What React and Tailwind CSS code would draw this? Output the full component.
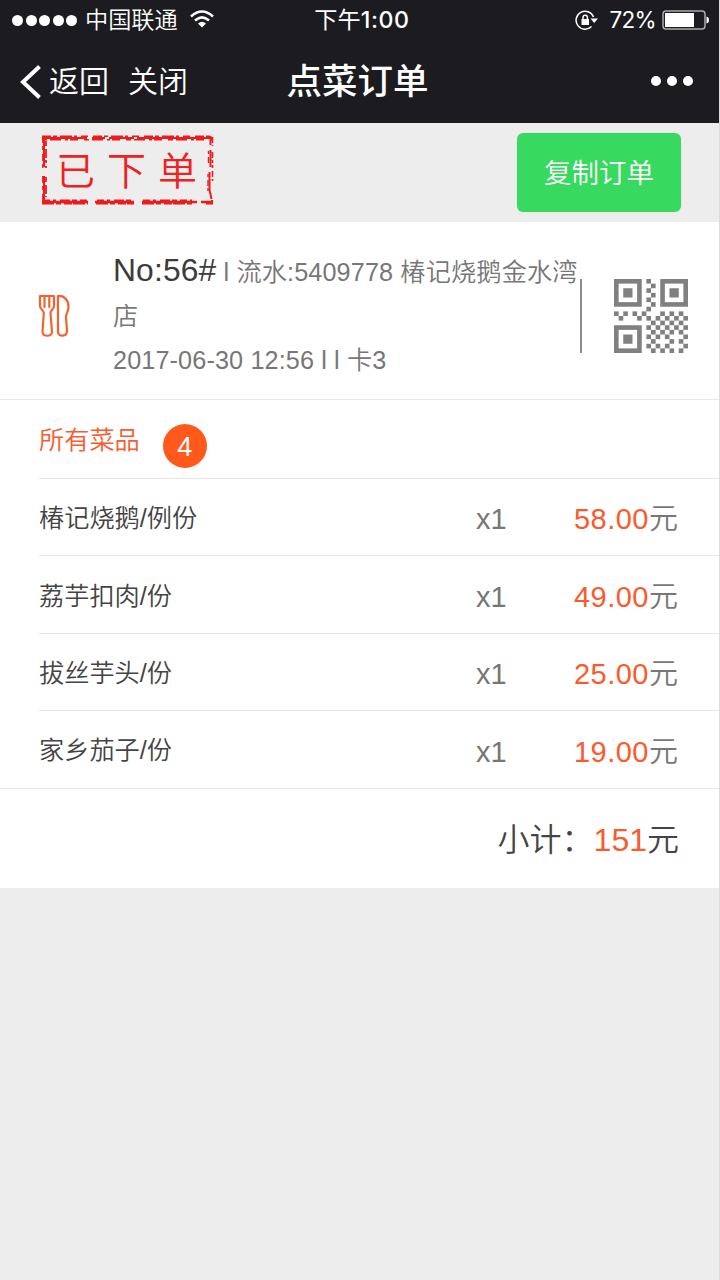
const cjk = "font-['Liberation_Sans','Noto_Sans_CJK_SC',sans-serif]";

const qr = [
  "0000000100000000",
  "0000000010000000",
  "0000000100000000",
  "0000000010000000",
  "0000000100000000",
  "0000000010000000",
  "0000000100000000",
  "1010101000101010",
  "0100010101010101",
  "0000000010101010",
  "0000000101010101",
  "0000000010101010",
  "0000000101010001",
  "0000000010001010",
  "0000000101010001",
  "0000000010101010",
];

function QrCode() {
  return (
    <svg width="74" height="74" viewBox="0 0 16 16" fill="#808080">
      {[[0, 0], [10, 0], [0, 10]].map(([x, y]) => (
        <g key={x + "-" + y} transform={`translate(${x} ${y})`}>
          <rect x="0.5" y="0.5" width="5" height="5" fill="none" stroke="#808080" />
          <rect x="2" y="2" width="2" height="2" />
        </g>
      ))}
      {qr.flatMap((row, y) =>
        [...row].map((c, x) => (c === "1" ? <rect key={x + "-" + y} x={x} y={y} width="1" height="1" /> : null)),
      )}
    </svg>
  );
}

function Stamp() {
  return (
    <div className="relative flex h-[70px] w-[172px] items-center justify-center">
      <svg className="absolute inset-0" width="172" height="70" fill="none" stroke="#f01a1c">
        <path d="M0 3H45M50 3H63M67 3H92M95 3H171" strokeWidth="2.2" />
        <path d="M0 1.300H171" strokeWidth="1.600" strokeDasharray="9 2 4 3 12 2 3 4 7 5" />
        <path d="M0 4.700H171" strokeWidth="1.600" strokeDasharray="5 3 11 4 3 2 8 6" />
        <path d="M0 67H46M53 67H92M100 67H155M159 67H171" strokeWidth="2.400" />
        <path d="M1 65.200H46M55 65.200H90M101 65.200H150" strokeWidth="1.500" strokeDasharray="7 3 3 4 10 2 5 3" />
        <path d="M0 68.800H46M54 68.800H92M100 68.800H153M164 68.800H171" strokeWidth="1.500" strokeDasharray="12 2 5 3 8 1" />
        <path d="M2 1V32M2 41V69" strokeWidth="2" />
        <path d="M4 6V33M4 42V62" strokeWidth="1.800" strokeDasharray="5 3 9 2 3 3" />
        <path d="M0.800 1V33M0.800 41V69" strokeWidth="1.400" strokeDasharray="7 3 4 4" />
        <path d="M168.500 1V10M168.500 15V32M167.500 37V55L169.500 64M170 65V69" strokeWidth="2" />
        <path d="M170.500 2V11M170.500 17V33M170.500 36V46" strokeWidth="1.600" strokeDasharray="6 2 3 2" />
        <path d="M166.500 16V30M166 39V58" strokeWidth="1.400" strokeDasharray="3 3 6 2" />
      </svg>
      <span className="pt-[3px] pl-[9px] text-[39px] leading-none font-[350] tracking-[12px] text-[#f22022]">已下单</span>
    </div>
  );
}

function Cutlery() {
  return (
    <svg width="32" height="44" viewBox="0 0 32 44" fill="none" stroke="#f4622f" strokeWidth="2.200" strokeLinejoin="round" strokeLinecap="round">
      <path d="M2 2H16V12C16 15.500 12.500 16 12.500 19L14 38C14 43 4.500 43 4.500 38L5.800 19C5.800 16 2 15.500 2 12ZM6.500 2V13M11.300 2V13" />
      <path d="M20 2C27 1.500 30.500 7 30.500 13C30.500 18 28 19 28 23L29 37C29 43 20 43 20 38Z" />
    </svg>
  );
}

const dishes = [
  ["椿记烧鹅/例份", "58.00"],
  ["荔芋扣肉/份", "49.00"],
  ["拔丝芋头/份", "25.00"],
  ["家乡茄子/份", "19.00"],
];

export default function App() {
  return (
    <div className={`flex h-[1280px] w-[720px] flex-col overflow-hidden border-r border-[#dcdcdc] bg-[#ededed] ${cjk}`}>
      <header className="-mr-px h-[123px] shrink-0 bg-[#1c1c20] text-white">
        <div className="grid h-10 grid-cols-[1fr_auto_1fr] items-center pr-[11px] pl-3 font-['Inter','Noto_Sans_CJK_SC',sans-serif]">
          <div className="flex items-center">
            <div className="flex gap-[2.500px]">
              {[0, 1, 2, 3, 4].map((i) => (
                <i key={i} className="size-[11px] rounded-full bg-white" />
              ))}
            </div>
            <span className="ml-2 text-[23.200px] leading-10 font-[350]">中国联通</span>
            <svg className="mb-[2px] ml-3" width="24" height="18" viewBox="0 0 24 18" fill="none" stroke="white" strokeWidth="2.600">
              <path d="M1 6.500Q12 -3.500 23 6.500M5 10.500Q12 4.200 19 10.500" />
              <path d="M8 13.500Q12 10 16 13.500L12 17.500Z" fill="white" stroke="none" />
            </svg>
          </div>
          <span className="pl-[3px] text-[23.200px] leading-10">
            下午<span className="font-medium tracking-[0.600px]">1:00</span>
          </span>
          <div className="flex items-center justify-end">
            <svg width="24" height="21" viewBox="0 0 24 21" fill="none" stroke="white" strokeWidth="1.500">
              <path d="M18.500 7A9 9 0 1 0 16.500 16.500" />
              <path d="M15.500 8.500H23L19.200 13Z" fill="white" stroke="none" />
              <rect x="6.500" y="9" width="7.500" height="6" fill="white" stroke="none" />
              <path d="M8 9V7.500a2.200 2.200 0 0 1 4.400 0V9" />
            </svg>
            <span className="ml-[11px] text-[22.500px] leading-10 tracking-[-0.700px]">72%</span>
            <svg className="ml-[6px]" width="47" height="20" viewBox="0 0 47 20">
              <rect x="1" y="1" width="42" height="18" rx="3" fill="none" stroke="#aaa" strokeWidth="1.500" />
              <rect x="3" y="3" width="29" height="14" fill="white" />
              <path d="M44.500 6.500q2.500 .5 2.500 3.500t-2.500 3.500z" fill="white" />
            </svg>
          </div>
        </div>
        <div className="grid h-[83px] grid-cols-[1fr_auto_1fr] items-center pr-[27px] pl-[20px]">
          <div className="flex items-center text-[30px] font-[350]">
            <svg width="22" height="34" viewBox="0 0 22 34" fill="none" stroke="white" strokeWidth="4">
              <path d="M19.500 1.500L3 17L19.500 32.500" />
            </svg>
            <span className="ml-[7px]">返回</span>
            <span className="ml-[19px]">关闭</span>
          </div>
          <h1 className="pt-[2px] pl-[2px] text-[35.500px] font-medium">点菜订单</h1>
          <div className="mb-[2px] flex justify-end gap-[6px]">
            {[0, 1, 2].map((i) => (
              <i key={i} className="size-[10px] rounded-full bg-white" />
            ))}
          </div>
        </div>
      </header>

      <div className="flex h-[99px] shrink-0 items-start justify-between pr-[38px] pl-[42px]">
        <div className="pt-3">
          <Stamp />
        </div>
        <button className="mt-[10px] h-[79px] w-[164px] rounded-md bg-[#38d95f] pt-[2px] text-[27.500px] font-[350] text-white">复制订单</button>
      </div>

      <main className="flex shrink-0 flex-col bg-white">
        <section className="flex h-[178px] items-center border-b border-[#e8e8e8] pl-[38px]">
          <div className="pt-2.5">
            <Cutlery />
          </div>
          <div className="ml-[43px] w-[467px] pt-[8px] text-[25.200px] leading-[44px] font-[350] tracking-[0.140px] whitespace-nowrap text-[#777]">
            <p>
              <span className="text-[31.800px] text-[#3b3b3d]">No:56#</span> l 流水:5409778 椿记烧鹅金水湾
            </p>
            <p>店</p>
            <p>2017-06-30 12:56 l l 卡3</p>
          </div>
          <div className="mt-[11px] h-[74px] w-[1.500px] bg-[#8a8a8a]" />
          <div className="mt-[11px] ml-8">
            <QrCode />
          </div>
        </section>

        <section>
          <div className="ml-[39px] flex h-[79px] items-center border-b border-[#e8e8e8]">
            <h2 className="pt-[3px] text-[25.200px] font-[350] text-[#fa5a2c]">所有菜品</h2>
            <span className="mt-[13px] ml-[23px] flex size-[44px] items-center justify-center rounded-full bg-[#ff5a1c] pt-[3px] text-[27px] text-white">4</span>
          </div>
          {dishes.map(([name, price], i) => (
            <div key={name} className={i === 3 ? "border-b border-[#e8e8e8] pl-[39px]" : "ml-[39px] border-b border-[#e8e8e8]"}>
              <div className="flex h-[76.400px] items-center pt-[4px]">
                <span className="w-[437px] text-[25.200px] font-[350] text-[#444]">{name}</span>
                <span className="pt-[2px] text-[29px] text-[#777]">x1</span>
                <span className="mr-[41px] ml-auto pt-[2px] text-[29px] font-[350] text-[#777]">
                  <span className="tracking-[0.500px] text-[#fa5a2c]">{price}</span>元
                </span>
              </div>
            </div>
          ))}
        </section>
        <div className="flex h-[99px] items-center justify-end pt-[3px] pr-[40px] text-[32px] font-[350] text-[#444]">
          <span>小计：</span>
          <span className="text-[#fa5a2c]">151</span>
          <span>元</span>
        </div>
      </main>
    </div>
  );
}
